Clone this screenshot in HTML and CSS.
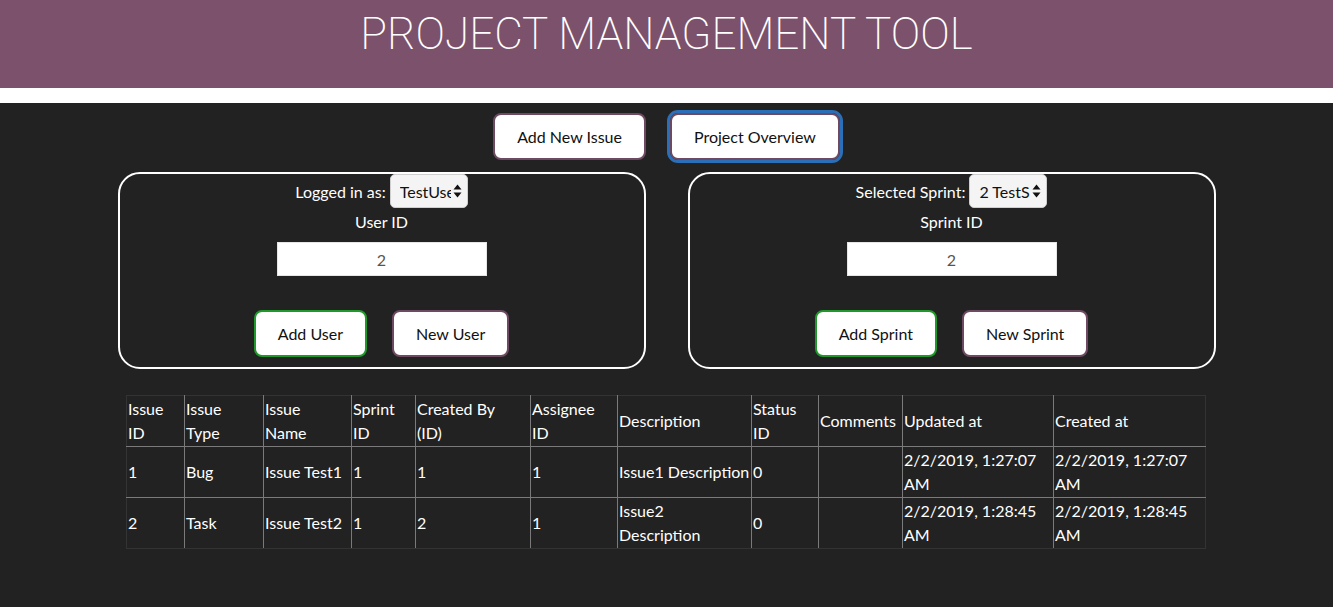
FILE: index.html
```html
<!DOCTYPE html>
<html>
<head>
<meta charset="utf-8">
<link rel="stylesheet" href="styles.css">
</head>
<body>
<header class="banner"><h1 class="title">PROJECT MANAGEMENT TOOL</h1></header>
<main class="main">
  <nav class="nav">
    <button class="btn btn-purple">Add New Issue</button>
    <button class="btn btn-purple btn-focus">Project Overview</button>
  </nav>
  <section class="panels">
    <div class="panel">
      <div class="pick-row">
        <span>Logged in as:</span>
        <span class="select"><span class="select-text">TestUser</span><svg class="arrows" width="9" height="14" viewBox="0 0 9 14"><path d="M4.5 0.5 L8.5 5.5 H0.5 Z M4.5 13.5 L8.5 8.5 H0.5 Z" fill="#111"/></svg></span>
      </div>
      <div class="label">User ID</div>
      <div class="idbox">2</div>
      <div class="actions">
        <button class="btn btn-green">Add User</button>
        <button class="btn btn-purple">New User</button>
      </div>
    </div>
    <div class="panel">
      <div class="pick-row">
        <span>Selected Sprint:</span>
        <span class="select"><span class="select-text">2 TestSprint</span><svg class="arrows" width="9" height="14" viewBox="0 0 9 14"><path d="M4.5 0.5 L8.5 5.5 H0.5 Z M4.5 13.5 L8.5 8.5 H0.5 Z" fill="#111"/></svg></span>
      </div>
      <div class="label">Sprint ID</div>
      <div class="idbox">2</div>
      <div class="actions">
        <button class="btn btn-green">Add Sprint</button>
        <button class="btn btn-purple">New Sprint</button>
      </div>
    </div>
  </section>
  <table class="issues">
    <colgroup>
      <col class="c1"><col class="c2"><col class="c3"><col class="c4"><col class="c5"><col class="c6"><col class="c7"><col class="c8"><col class="c9"><col class="c10"><col class="c11">
    </colgroup>
    <thead>
      <tr><th>Issue<br>ID</th><th>Issue<br>Type</th><th>Issue<br>Name</th><th>Sprint<br>ID</th><th>Created By<br>(ID)</th><th>Assignee<br>ID</th><th>Description</th><th>Status<br>ID</th><th>Comments</th><th>Updated at</th><th>Created at</th></tr>
    </thead>
    <tbody>
      <tr><td>1</td><td>Bug</td><td>Issue Test1</td><td>1</td><td>1</td><td>1</td><td>Issue1 Description</td><td>0</td><td></td><td>2/2/2019, 1:27:07 AM</td><td>2/2/2019, 1:27:07 AM</td></tr>
      <tr><td>2</td><td>Task</td><td>Issue Test2</td><td>1</td><td>2</td><td>1</td><td>Issue2<br>Description</td><td>0</td><td></td><td>2/2/2019, 1:28:45 AM</td><td>2/2/2019, 1:28:45 AM</td></tr>
    </tbody>
  </table>
</main>
</body>
</html>
```
FILE: styles.css
```css
html, body { margin: 0; padding: 0; }
body {
  background: #ffffff;
  font-family: "Lato", "Noto Sans", sans-serif;
  font-size: 16px;
  color: #ffffff;
}
.banner {
  background: #7b516b;
  height: 88px;
  margin-bottom: 15px;
  display: flex;
  justify-content: center;
}
.title {
  margin: 0;
  padding-top: 9px;
  font-family: "Roboto", "Lato", sans-serif;
  font-weight: 200;
  font-size: 44px;
  line-height: 50px;
  letter-spacing: 0;
  color: #ffffff;
}
.main {
  background: #222222;
  min-height: 504px;
  padding-top: 7px;
  display: flex;
  flex-direction: column;
  align-items: center;
}
.nav {
  display: flex;
  gap: 24px;
  align-items: center;
  height: 53px;
}
.btn {
  font-family: "Lato", "Noto Sans", sans-serif;
  font-size: 16px;
  background: #ffffff;
  color: #111;
  border-radius: 8px;
  height: 47px;
  padding: 0 22px;
  cursor: pointer;
}
.btn-purple { border: 2px solid #6e4a62; }
.btn-green { border: 2px solid #1f9a2a; }
.btn-focus {
  outline: 3px solid #2b6fb8;
  outline-offset: 0px;
}
.panels {
  display: flex;
  gap: 42px;
  margin-top: 9px;
}
.panel {
  box-sizing: border-box;
  width: 528px;
  height: 197px;
  border: 2px solid #ffffff;
  border-radius: 22px;
  display: flex;
  flex-direction: column;
  align-items: center;
}
.pick-row {
  display: flex;
  align-items: center;
  gap: 4px;
  height: 34px;
}
.select {
  box-sizing: border-box;
  display: inline-flex;
  align-items: center;
  width: 78px;
  height: 34px;
  background: #f4f4f4;
  border: 1px solid #cfcfcf;
  border-radius: 5px;
  color: #111;
  padding: 0 5px 0 9px;
  gap: 2px;
}
.select-text {
  flex: 1;
  overflow: hidden;
  white-space: nowrap;
}
.arrows { flex: none; }
.label {
  margin-top: 3px;
  line-height: 22px;
}
.idbox {
  margin-top: 9px;
  box-sizing: border-box;
  width: 210px;
  height: 34px;
  background: #ffffff;
  color: #555;
  text-align: center;
  line-height: 34px;
  border: 1px solid #e6e6e6;
}
.actions {
  margin-top: 34px;
  display: flex;
  gap: 25px;
}
.issues {
  margin-top: 26px;
  margin-left: -1px;
  border-collapse: collapse;
  table-layout: fixed;
  width: 1079px;
  border: 1px solid #333333;
  color: #ffffff;
}
.c1 { width: 58px; } .c2 { width: 79px; } .c3 { width: 88px; } .c4 { width: 64px; }
.c5 { width: 115px; } .c6 { width: 87px; } .c7 { width: 134px; } .c8 { width: 67px; }
.c9 { width: 84px; } .c10 { width: 151px; } .c11 { width: 152px; }
.issues th, .issues td {
  border: 1px solid #7a7a7a;
  padding: 1px 1px;
  text-align: left;
  font-weight: 400;
  line-height: 24px;
  height: 48px;
  vertical-align: middle;
}
.issues tr:first-child th { border-top-color: #333; }
.issues th:first-child, .issues td:first-child { border-left-color: #333; }
.issues th:last-child, .issues td:last-child { border-right-color: #333; }
.issues tbody tr:last-child td { border-bottom-color: #333; }
```
